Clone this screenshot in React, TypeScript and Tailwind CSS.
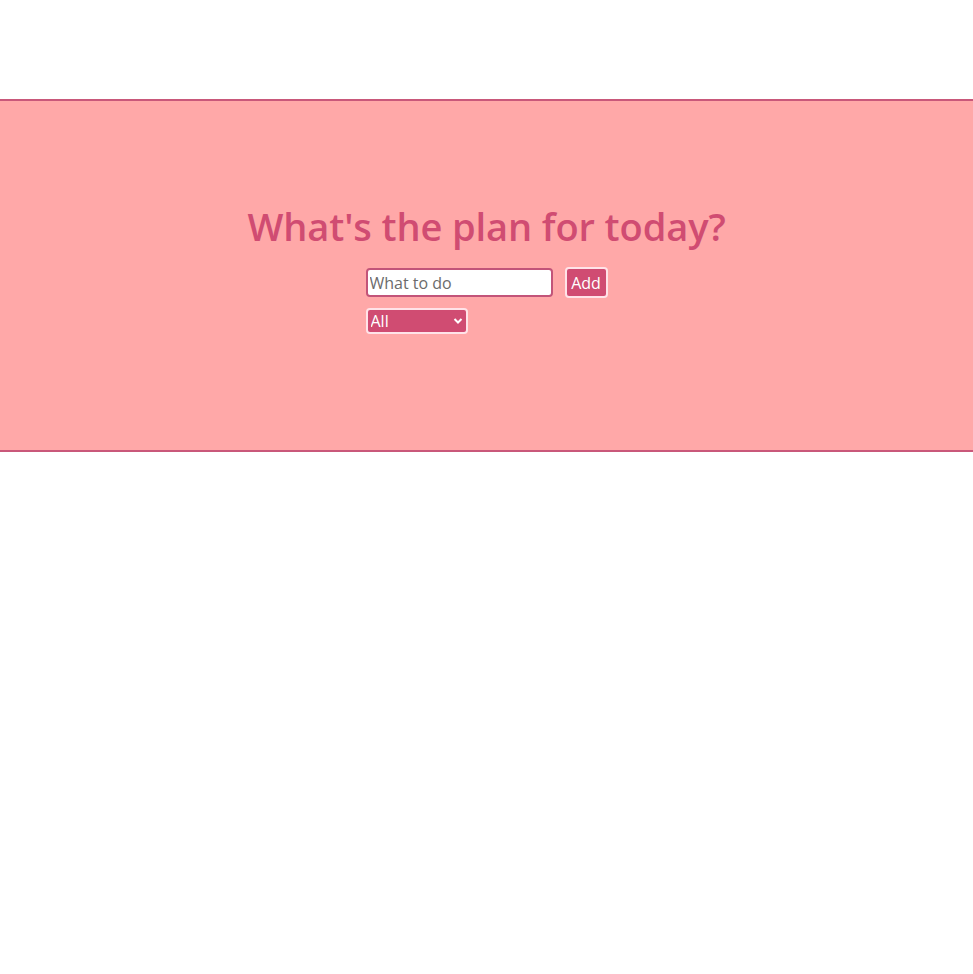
import { useState } from "react";

const App = () => {
  const [text, setText] = useState("");
  const [filter, setFilter] = useState("all");

  return (
    <div className="min-h-[974px] bg-white font-['Open_Sans',sans-serif]">
      <div className="h-[99px]" />
      <section className="h-[353px] border-y-2 border-[#c9587a] bg-[#ffa8a8]">
        <div className="flex flex-col items-center pt-[99px]">
          <h1 className="text-[38px] leading-[52px] font-semibold text-[#d04c72] tracking-[-0.1px]">
            What's the plan for today?
          </h1>
          <div className="mt-[15px] w-[242px]">
            <div className="flex items-center gap-[12px]">
              <input
                value={text}
                onChange={(e) => setText(e.target.value)}
                placeholder="What to do"
                className="h-[29px] w-[187px] rounded-[4px] border-2 border-[#c25479] bg-white px-[2px] text-[16px] text-[#333] placeholder:text-[#6b6b6b] outline-none"
              />
              <button className="h-[31px] w-[43px] rounded-[4px] border-2 border-[#ffe3e8] bg-[#d04c72] text-[16px] text-white">
                Add
              </button>
            </div>
            <div className="mt-[10px]">
              <div className="relative h-[26px] w-[102px]">
                <select
                  value={filter}
                  onChange={(e) => setFilter(e.target.value)}
                  className="h-full w-full appearance-none rounded-[4px] border-2 border-[#ffe3e8] bg-[#d04c72] pl-[3px] text-[16px] leading-none text-white outline-none"
                >
                  <option value="all">All</option>
                  <option value="done">Completed</option>
                  <option value="todo">Uncompleted</option>
                </select>
                <svg
                  className="pointer-events-none absolute right-[5px] top-[9px] h-[8px] w-[10px]"
                  viewBox="0 0 10 8"
                  fill="none"
                  stroke="white"
                  strokeWidth="2"
                >
                  <path d="M1.5 2 L5 5.5 L8.5 2" />
                </svg>
              </div>
            </div>
          </div>
        </div>
      </section>
    </div>
  );
};

export default App;
